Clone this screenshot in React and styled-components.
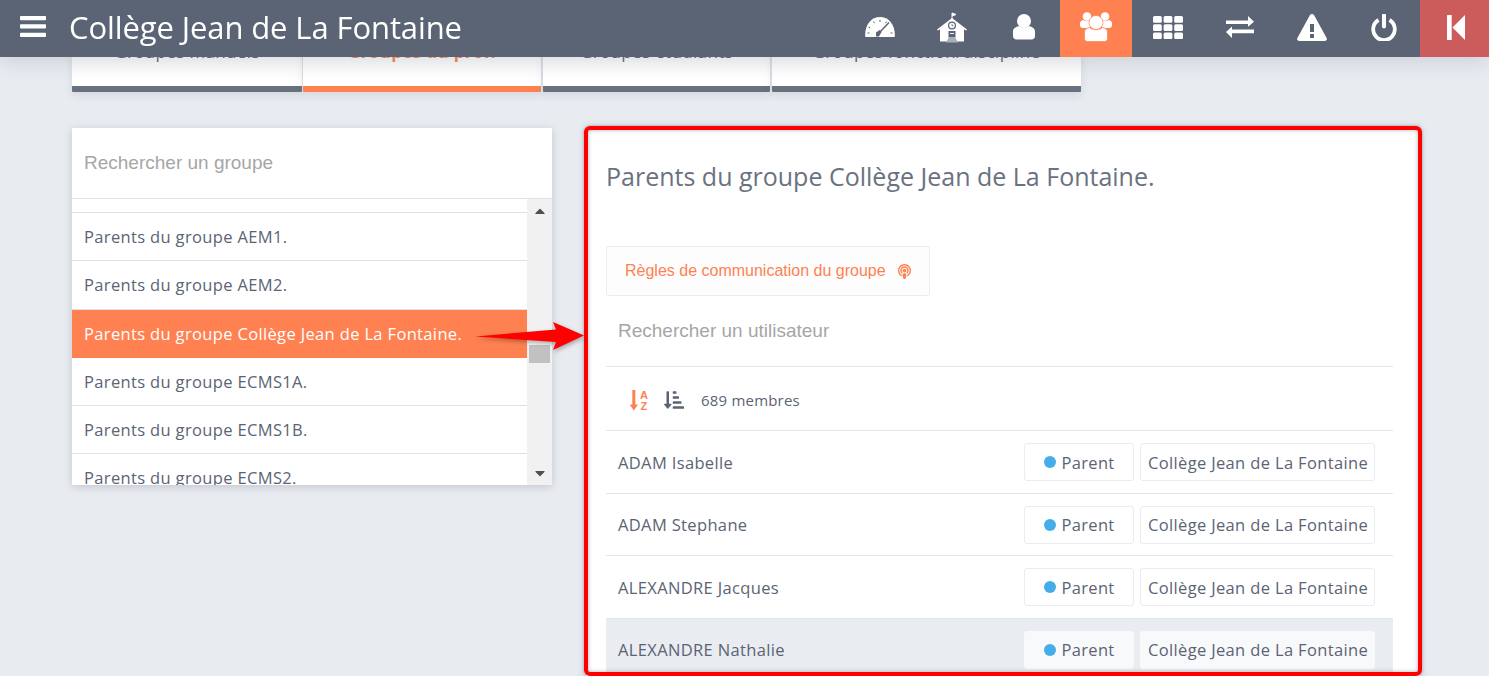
import React from 'react';
import styled, { createGlobalStyle } from 'styled-components';
import { FaPodcast, FaSortAmountDownAlt, FaCaretUp, FaCaretDown } from 'react-icons/fa';

const GlobalStyle = createGlobalStyle`
    html, body {
        margin: 0;
        height: 676px;
        overflow: hidden;
        background: #e8ebf0;
        font-family: "Open Sans", sans-serif;
        color: #5b6474;
    }
    * { box-sizing: border-box; }
`;

const Header = styled.header`
    position: fixed;
    top: 0;
    left: 0;
    right: 0;
    height: 57px;
    display: flex;
    align-items: stretch;
    background: #5b6474;
    box-shadow: 0 4px 20px rgba(91, 100, 116, 0.2);
    z-index: 10;
`;

const Burger = styled.button`
    width: 69px;
    border: 0;
    padding: 0 0 4px 20px;
    background: none;
    display: flex;
    align-items: center;
`;

const Title = styled.h1`
    flex: 1;
    margin: 0;
    font-size: 31px;
    font-weight: 400;
    line-height: 55px;
    color: #fff;
    letter-spacing: -0.1px;
`;

const NavItem = styled.div`
    width: ${(p) => (p.$wide ? '69px' : '72px')};
    display: flex;
    align-items: center;
    justify-content: center;
    padding: ${(p) => (p.$wide ? '0 0 3px 3px' : '0 0 3px')};
    background: ${(p) => (p.$active ? '#ff8151' : p.$danger ? '#cc5b5b' : 'transparent')};
`;

const Main = styled.main`
    padding: 26px 67px 0 72px;
`;

const Tabs = styled.nav`
    display: flex;
    gap: 1px;
    margin-bottom: 36px;
`;

const Tab = styled.div`
    width: ${(p) => p.$w}px;
    margin-right: ${(p) => p.$gap || 0}px;
    height: 66px;
    padding-top: 15px;
    text-align: center;
    font-size: 17px;
    font-weight: ${(p) => (p.$active ? 700 : 400)};
    letter-spacing: 0.35px;
    line-height: 22px;
    white-space: nowrap;
    color: ${(p) => (p.$active ? '#ff8151' : '#5b6474')};
    background: linear-gradient(#eeeeee, #ffffff 85%);
    border-bottom: 6px solid ${(p) => (p.$active ? '#ff8151' : '#68717e')};
    border-radius: 0 0 1px 1px;
    box-shadow: 0 3px 8px rgba(91, 100, 116, 0.14);
`;

const Columns = styled.div`
    display: flex;
    align-items: flex-start;
    gap: 34px;
`;

const GroupPanel = styled.aside`
    width: 480px;
    height: 357px;
    background: #fff;
    box-shadow: 0 2px 8px rgba(91, 100, 116, 0.25);
    flex: none;
`;

const GroupSearch = styled.div`
    height: 71px;
    padding: 0 12px 1px;
    display: flex;
    align-items: center;
    font-family: "Liberation Sans", sans-serif;
    font-size: 19px;
    color: #a6a6a6;
    border-bottom: 1px solid #dfe1e5;
`;

const GroupBody = styled.div`
    height: 286px;
    display: flex;
`;

const GroupList = styled.div`
    flex: 1;
    overflow: hidden;
`;

const GroupTop = styled.div`
    height: 14px;
    border-bottom: 1px solid #dfe1e5;
`;

const GroupRow = styled.div`
    height: 48.25px;
    padding: 0 12px;
    display: flex;
    align-items: center;
    font-size: 16.5px;
    letter-spacing: 0.35px;
    white-space: nowrap;
    color: ${(p) => (p.$active ? '#fff' : '#5b6474')};
    background: ${(p) => (p.$active ? '#ff8151' : '#fff')};
    border-bottom: 1px solid ${(p) => (p.$active ? '#ff8151' : '#dfe1e5')};
    font-weight: ${(p) => (p.$active ? 500 : 400)};
`;

const Scrollbar = styled.div`
    width: 25px;
    flex: none;
    position: relative;
    background: #f1f1f1;
    color: #505050;
    display: flex;
    flex-direction: column;
    justify-content: space-between;
    align-items: center;
    padding: 4px 0 4px;
    font-size: 16px;
`;

const Thumb = styled.div`
    position: absolute;
    top: 146px;
    left: 2px;
    width: 21px;
    height: 18px;
    background: #c1c1c1;
`;

const MemberPanel = styled.section`
    position: relative;
    width: 834px;
    height: 560px;
    padding: 30px 27px 0 20px;
    background: #fff;
    box-shadow: 0 0 8px rgba(91, 100, 116, 0.3);
    flex: none;
`;

const RedFrame = styled.div`
    position: absolute;
    top: -2px;
    left: -2px;
    width: 838px;
    height: 550px;
    border: 4px solid #ff0000;
    border-radius: 6px;
    box-shadow: 0 0 3px rgba(0, 0, 0, 0.3), inset 0 0 4px rgba(0, 0, 0, 0.3);
    pointer-events: none;
    z-index: 3;
`;

const RedArrow = styled.svg`
    position: absolute;
    top: 318px;
    left: 470px;
    z-index: 4;
    overflow: visible;
    filter: drop-shadow(1px 2px 2px rgba(0, 0, 0, 0.3));
`;

const PanelTitle = styled.h2`
    margin: 0 0 52px;
    font-size: 25px;
    font-weight: 400;
    line-height: 36px;
    color: #6a7280;
`;

const RulesButton = styled.div`
    width: 324px;
    height: 50px;
    padding-left: 18px;
    display: flex;
    align-items: center;
    gap: 11px;
    font-family: "Liberation Sans", sans-serif;
    font-size: 16px;
    color: #ff8151;
    background: #fdfdfe;
    border: 1px solid #eaecf1;
    border-radius: 3px;
`;

const MemberSearch = styled.div`
    height: 71px;
    padding: 0 12px 1px;
    display: flex;
    align-items: center;
    font-family: "Liberation Sans", sans-serif;
    font-size: 19px;
    color: #a6a6a6;
    border-bottom: 1px solid #e3e5e9;
`;

const SortBar = styled.div`
    height: 64px;
    padding: 3px 12px 0 24px;
    display: flex;
    align-items: center;
    font-size: 15px;
    font-weight: 500;
    letter-spacing: 0.2px;
    border-bottom: 1px solid #e3e5e9;
`;

const SortIcon = styled.span`
    display: flex;
    font-size: 20px;
    margin-right: ${(p) => p.$gap}px;
    color: ${(p) => (p.$active ? '#ff8151' : '#5b6474')};
`;

const MemberRow = styled.div`
    height: 62.5px;
    padding: 1px 18px 0 12px;
    display: flex;
    align-items: center;
    gap: 6px;
    font-size: 16.5px;
    letter-spacing: 0.35px;
    background: ${(p) => (p.$active ? '#e9ecf1' : '#fff')};
    border-bottom: 1px solid #e3e5e9;
`;

const MemberName = styled.span`
    flex: 1;
`;

const Badge = styled.span`
    height: 38px;
    width: ${(p) => p.$w}px;
    display: flex;
    align-items: center;
    justify-content: center;
    gap: 5px;
    padding-left: 1px;
    white-space: nowrap;
    background: ${(p) => (p.$active ? '#f8f9fb' : '#fff')};
    border: 1px solid ${(p) => (p.$active ? '#f8f9fb' : '#eaecf1')};
    border-radius: 3px;
`;

const Dot = styled.i`
    width: 12px;
    height: 12px;
    border-radius: 50%;
    background: #45aeea;
`;

const SortLetter = styled.text`
    font-family: "Liberation Sans", sans-serif;
    font-size: 11px;
    font-weight: 700;
    fill: currentColor;
`;

const tabs = [
    { label: 'Groupes manuels', w: 230 },
    { label: 'Groupes du prof.', w: 238, active: true, gap: 1 },
    { label: 'Groupes étudiants', w: 227, gap: 1 },
    { label: 'Groupes fonction/discipline', w: 309 },
];

const groups = ['AEM1.', 'AEM2.', 'Collège Jean de La Fontaine.', 'ECMS1A.', 'ECMS1B.', 'ECMS2.'];
const members = ['ADAM Isabelle', 'ADAM Stephane', 'ALEXANDRE Jacques', 'ALEXANDRE Nathalie'];

const AlphaSortIcon = () => (
    <svg width="19" height="21" viewBox="0 0 19 21" fill="currentColor">
        <path d="M2.300 0h3v14.500H8L3.800 20.500-.4 14.500h2.700z" />
        <SortLetter x="10" y="9">A</SortLetter>
        <SortLetter x="10.500" y="20">Z</SortLetter>
    </svg>
);

const GaugeIcon = () => (
    <svg width="30" height="20" viewBox="0 0 30 20">
        <path d="M.3 20C-.8 8.500 6 0 15 0s15.800 8.500 14.700 20z" fill="#fff" />
        <path d="M15 3v2M8.500 4.500l1 1.700M21.500 4.500l-1 1.700M3.500 10l1.700 1M2.500 16h2M27.500 16h-2" stroke="#5b6474" strokeWidth="1" />
        <path d="M24 5.500L14 16" stroke="#5b6474" strokeWidth="1.500" />
        <path d="M11 15.500l3.500-2.500 2 2-2.500 4.500h-3z" fill="#5b6474" />
    </svg>
);

const SchoolIcon = () => (
    <svg width="30" height="31" viewBox="0 0 30 31">
        <path d="M15 8V1M15 1l4 1.500-4 1.500" stroke="#fff" strokeWidth="1" fill="#fff" />
        <path d="M15 6L0 17.500l1 1 2-1.300V29.500h24V17.200l2 1.300 1-1z" fill="#fff" />
        <circle cx="15" cy="13.500" r="4" fill="#5b6474" />
        <circle cx="15" cy="13.500" r="2.800" fill="#fff" />
        <path d="M15 11.800v2h1.500" stroke="#5b6474" strokeWidth="0.800" fill="none" />
        <rect x="11.500" y="19" width="7" height="6.500" fill="#5b6474" />
        <rect x="13" y="21" width="4" height="1" fill="#fff" />
        <path d="M9 30.500l2.500-4.500h7l2.500 4.500z" fill="#a9afb8" />
    </svg>
);

const UserIcon = () => (
    <svg width="22" height="26" viewBox="0 0 22 26">
        <ellipse cx="11" cy="7" rx="7" ry="7" fill="#fff" />
        <path d="M0 17.500c0-3 2.500-4.500 6-5.500 3 2 7 2 10 0 3.500 1 6 2.500 6 5.500V22c0 2-1.500 3.500-3.500 3.500h-15C1.500 25.500 0 24 0 22z" fill="#fff" />
    </svg>
);

const GroupIcon = () => (
    <svg width="32" height="30" viewBox="0 0 32 30">
        <circle cx="7" cy="4.500" r="4.300" fill="#fff" />
        <circle cx="25" cy="4.500" r="4.300" fill="#fff" />
        <path d="M0 11c0-1.500 1.500-2.500 3-3 2 1.500 5 1.500 7 0l1 1c-1 1.500-1.500 4-1 6l-1 1H3c-2 0-3-1-3-2.500zM32 11c0-1.500-1.500-2.500-3-3-2 1.500-5 1.500-7 0l-1 1c1 1.500 1.500 4 1 6l1 1h6c2 0 3-1 3-2.500z" fill="#fff" />
        <circle cx="16" cy="10.500" r="7" fill="#fff" stroke="#ff8151" strokeWidth="0.700" />
        <path d="M4.500 20c0-2.500 2-3.800 5-4.500 3.500 3 9.500 3 13 0 3 .7 5 2 5 4.500v6.500c0 2-1.500 3-3 3h-17c-1.500 0-3-1-3-3z" fill="#fff" stroke="#ff8151" strokeWidth="0.700" />
    </svg>
);

const GridIcon = () => (
    <svg width="30" height="23" viewBox="0 0 30 23" fill="#fff">
        {[0, 8.200, 16.400].map((y) =>
            [0, 10.600, 21.200].map((x) => <rect key={`${x}-${y}`} x={x} y={y} width="8.800" height="6.700" rx="1.500" />)
        )}
    </svg>
);

const ExchangeIcon = () => (
    <svg width="30" height="22" viewBox="0 0 30 22" fill="#fff">
        <path d="M1 4.500h22V0l6 5.800-6 5V8H1zM29 13.500v3.800H7V22l-6-6 6-5.600v3.100z" />
    </svg>
);

const WarningIcon = () => (
    <svg width="30" height="27" viewBox="0 0 30 27">
        <path d="M15 0c1 0 1.800.6 2.300 1.500l12.300 22.500c.8 1.500-.2 3-1.800 3H2.200C.6 27-.4 25.500.4 24L12.700 1.500C13.200.6 14 0 15 0z" fill="#fff" />
        <rect x="13" y="10" width="4" height="8" fill="#5b6474" />
        <rect x="13" y="20" width="4" height="4" fill="#5b6474" />
    </svg>
);

const PowerIcon = () => (
    <svg width="26" height="27" viewBox="0 0 26 27" fill="none" stroke="#fff">
        <path d="M7.500 6a10.800 10.800 0 1 0 11 0" strokeWidth="3.800" />
        <path d="M13 1.500v11" strokeWidth="4" strokeLinecap="round" />
    </svg>
);

const CollapseIcon = () => (
    <svg width="18" height="25" viewBox="0 0 18 25" fill="#fff">
        <rect x="0" y="0" width="4.700" height="25" rx="0.500" />
        <path d="M18 0v25L5.500 12.500z" />
    </svg>
);

const BurgerIcon = () => (
    <svg width="26" height="21" viewBox="0 0 26 21" fill="#fff">
        <rect width="26" height="4.300" rx="0.800" />
        <rect y="8.300" width="26" height="4.300" rx="0.800" />
        <rect y="16.700" width="26" height="4.300" rx="0.800" />
    </svg>
);

function App() {
    return (
        <>
            <GlobalStyle />
            <Header>
                <Burger aria-label="Menu">
                    <BurgerIcon />
                </Burger>
                <Title>Collège Jean de La Fontaine</Title>
                <NavItem><GaugeIcon /></NavItem>
                <NavItem><SchoolIcon /></NavItem>
                <NavItem><UserIcon /></NavItem>
                <NavItem $active><GroupIcon /></NavItem>
                <NavItem><GridIcon /></NavItem>
                <NavItem><ExchangeIcon /></NavItem>
                <NavItem><WarningIcon /></NavItem>
                <NavItem><PowerIcon /></NavItem>
                <NavItem $danger $wide><CollapseIcon /></NavItem>
            </Header>
            <Main>
                <Tabs>
                    {tabs.map((tab) => (
                        <Tab key={tab.label} $w={tab.w} $gap={tab.gap} $active={tab.active}>
                            {tab.label}
                        </Tab>
                    ))}
                </Tabs>
                <Columns>
                    <GroupPanel>
                        <GroupSearch>Rechercher un groupe</GroupSearch>
                        <GroupBody>
                            <GroupList>
                                <GroupTop />
                                {groups.map((name, i) => (
                                    <GroupRow key={name} $active={i === 2}>
                                        Parents du groupe {name}
                                    </GroupRow>
                                ))}
                            </GroupList>
                            <Scrollbar>
                                <FaCaretUp />
                                <Thumb />
                                <FaCaretDown />
                            </Scrollbar>
                        </GroupBody>
                    </GroupPanel>
                    <MemberPanel>
                        <RedFrame />
                        <PanelTitle>Parents du groupe Collège Jean de La Fontaine.</PanelTitle>
                        <RulesButton>
                            Règles de communication du groupe
                            <FaPodcast size={15} />
                        </RulesButton>
                        <MemberSearch>Rechercher un utilisateur</MemberSearch>
                        <SortBar>
                            <SortIcon $active $gap={15}><AlphaSortIcon /></SortIcon>
                            <SortIcon $gap={17}><FaSortAmountDownAlt /></SortIcon>
                            689 membres
                        </SortBar>
                        {members.map((name, i) => (
                            <MemberRow key={name} $active={i === 3}>
                                <MemberName>{name}</MemberName>
                                <Badge $w={110} $active={i === 3}><Dot />Parent</Badge>
                                <Badge $w={235} $active={i === 3}>Collège Jean de La Fontaine</Badge>
                            </MemberRow>
                        ))}
                    </MemberPanel>
                </Columns>
            </Main>
            <RedArrow width="110" height="36" viewBox="0 0 110 36">
                <path d="M5 18.500L86 11.500 83 4 114 17.500 83 32 86 24z" fill="#ff0000" />
            </RedArrow>
        </>
    );
}

export default App;
